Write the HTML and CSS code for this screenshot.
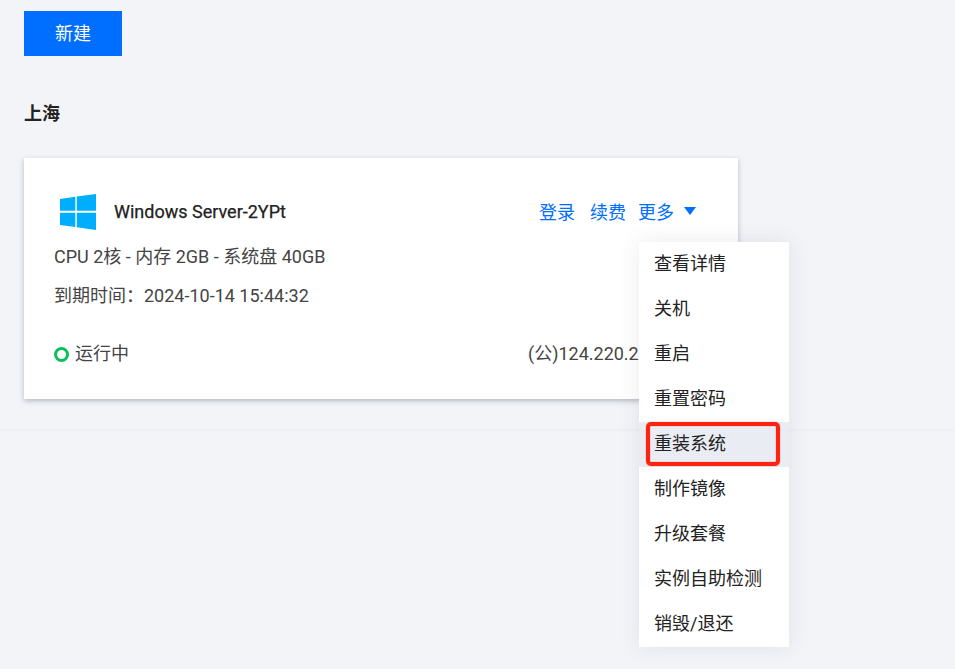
FILE: index.html
```html
<!DOCTYPE html>
<html lang="zh-CN">
<head>
<meta charset="utf-8">
<title>实例</title>
<link rel="stylesheet" href="styles.css">
</head>
<body>
<main class="page">
  <button class="new-btn" type="button">新建</button>
  <h2 class="region">上海</h2>
  <section class="card">
    <div class="card-head">
      <svg class="win-logo" viewBox="0 0 36 36" width="36" height="36" aria-hidden="true">
        <path fill="#00aeff" d="M0 5 15.3 2.8V16.8H0ZM16.8 2.5 36 0V16.8H16.8ZM0 18.8H15.3V33L0 30.9ZM16.8 18.8H36V36L16.8 33.3Z"/>
      </svg>
      <span class="name">Windows Server-2YPt</span>
      <nav class="actions">
        <a class="login">登录</a>
        <a>续费</a>
        <a class="more">更多<i class="caret"></i></a>
      </nav>
    </div>
    <p class="spec">CPU 2核 - 内存 2GB - 系统盘 40GB</p>
    <p class="expire">到期时间：2024-10-14 15:44:32</p>
    <div class="card-foot">
      <span class="status"><i class="dot"></i>运行中</span>
      <span class="ip">(公)124.220.2</span>
    </div>
  </section>
</main>
<ul class="menu">
  <li>查看详情</li>
  <li>关机</li>
  <li>重启</li>
  <li>重置密码</li>
  <li class="active">重装系统</li>
  <li>制作镜像</li>
  <li>升级套餐</li>
  <li>实例自助检测</li>
  <li>销毁/退还</li>
</ul>
<div class="highlight"></div>
</body>
</html>
```
FILE: styles.css
```css
* { box-sizing: border-box; }
html, body { height: 100%; }
body {
  margin: 0;
  background: #f2f4f8;
  font-family: Roboto, "Noto Sans CJK SC", sans-serif;
  color: #333;
  overflow: hidden;
  position: relative;
}
.page {
  height: 430px;
  padding: 11px 24px 0;
  border-bottom: 1px solid #eceef2;
  box-shadow: 0 1px 2px rgba(0, 0, 0, .025);
}
.new-btn {
  display: block;
  width: 98px;
  height: 45px;
  border: 0;
  padding: 0 0 4px;
  background: #006eff;
  color: #fff;
  font: inherit;
  font-size: 18px;
}
.region {
  margin: 45px 0 0;
  font-size: 18px;
  line-height: 26px;
  font-weight: 700;
  color: #222;
}
.card {
  width: 714px;
  height: 241px;
  margin-top: 31px;
  padding: 36px 30px 0;
  background: #fff;
  box-shadow: 0 2px 5px rgba(54, 58, 80, .32);
}
.card-head {
  display: flex;
  align-items: center;
  height: 36px;
  padding-left: 6px;
}
.win-logo { flex: none; }
.name {
  margin-left: 18px;
  margin-bottom: 2px;
  font-size: 18px;
  font-weight: 400;
  color: #222;
  -webkit-text-stroke: .25px #222;
}
.actions {
  display: flex;
  margin-left: auto;
  margin-right: 12px;
  margin-bottom: 2px;
  font-size: 18px;
  color: #006eff;
}
.login { margin-right: 15px; }
.more { display: flex; align-items: center; margin-left: 12px; }
.caret {
  margin-left: 10px;
  border-left: 6px solid transparent;
  border-right: 6px solid transparent;
  border-top: 8px solid #006eff;
}
.spec, .expire {
  margin: 0;
  font-size: 18px;
  line-height: 24px;
  color: #444;
}
.spec { margin-top: 15px; }
.expire { margin-top: 15px; }
.card-foot {
  display: flex;
  justify-content: space-between;
  margin-top: 33px;
  font-size: 18px;
  line-height: 26px;
  color: #444;
}
.status { display: flex; align-items: center; }
.dot {
  width: 15px;
  height: 15px;
  margin-right: 6px;
  border: 3px solid #0abf5b;
  border-radius: 50%;
}
.ip {
  flex: none;
  width: 111px;
  margin-right: 69px;
  white-space: nowrap;
  overflow: hidden;
}
.menu {
  position: absolute;
  left: 639px;
  top: 242px;
  width: 150px;
  margin: 0;
  padding: 0;
  list-style: none;
  background: #fff;
  box-shadow: 0 0 20px rgba(54, 58, 80, .1);
}
.menu li {
  height: 45px;
  padding-left: 15px;
  font-size: 18px;
  line-height: 43px;
  color: #222;
}
.menu .active { background: #e9ecf2; }
.highlight {
  position: absolute;
  left: 646px;
  top: 422px;
  width: 134px;
  height: 44px;
  border: 4px solid #ff2412;
  border-radius: 5px;
  box-shadow: 0 0 1px #ff2412, inset 0 0 1px #ff2412;
}
```
